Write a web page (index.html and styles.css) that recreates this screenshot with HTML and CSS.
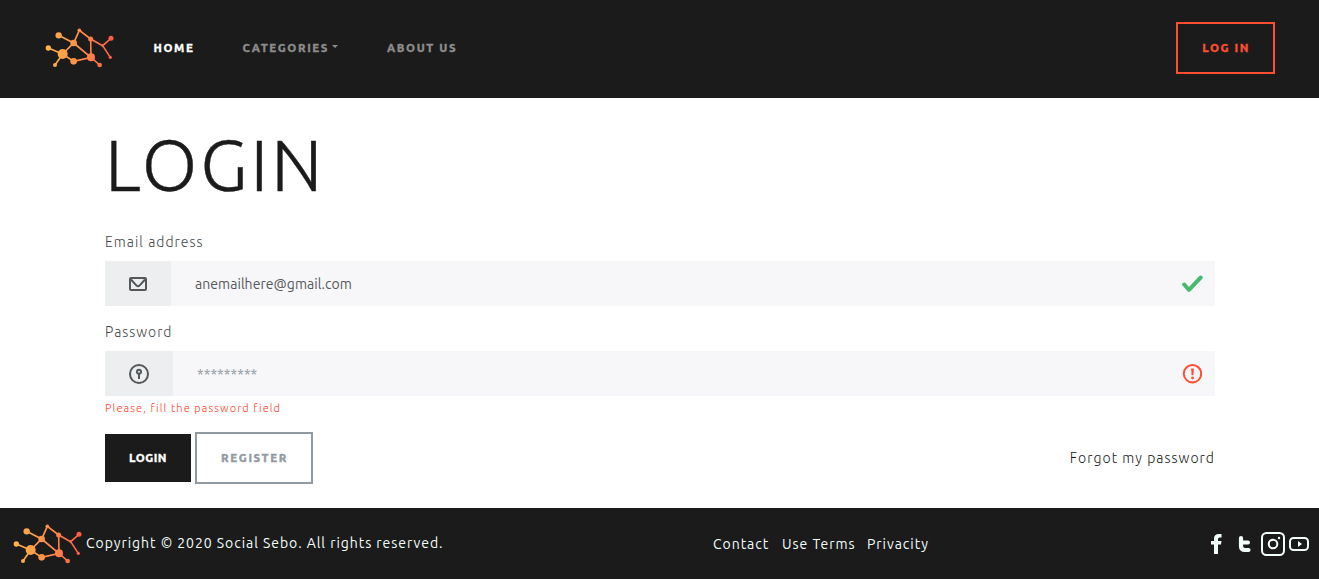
FILE: index.html
```html
<!DOCTYPE html>
<html lang="en">
<head>
<meta charset="utf-8">
<title>Social Sebo - Login</title>
<link rel="stylesheet" href="styles.css">
</head>
<body>
<svg class="defs" width="0" height="0" aria-hidden="true">
  <defs>
    <linearGradient id="warm" gradientUnits="userSpaceOnUse" x1="30" y1="0" x2="236" y2="0">
      <stop offset="0" stop-color="#ffb648"/><stop offset=".6" stop-color="#ff8648"/><stop offset="1" stop-color="#fa5a48"/>
    </linearGradient>
    <symbol id="logo" viewBox="30 36 210 126">
      <path d="M71 61L116 84L133 46L167 72L203 92L228 70M203 92L226 127M40 99L83 117L60 150M83 117L116 84L168 127L167 72M83 117L116 139L168 127L194 150" fill="none" stroke="url(#warm)" stroke-width="5"/>
      <g fill="url(#warm)">
        <circle cx="71" cy="61" r="9.5"/><circle cx="133" cy="46" r="5.5"/><circle cx="116" cy="84" r="10"/><circle cx="167" cy="72" r="7.5"/><circle cx="228" cy="70" r="7.5"/><circle cx="203" cy="92" r="4"/><circle cx="226" cy="127" r="5"/><circle cx="40" cy="99" r="8"/><circle cx="83" cy="117" r="15"/><circle cx="60" cy="150" r="6"/><circle cx="116" cy="139" r="10"/><circle cx="168" cy="127" r="12"/><circle cx="194" cy="150" r="7"/>
      </g>
    </symbol>
  </defs>
</svg>
<header class="topbar">
  <svg class="logo"><use href="#logo"/></svg>
  <nav class="nav">
    <a class="nav-link active">HOME</a>
    <a class="nav-link categories">CATEGORIES<span class="caret"></span></a>
    <a class="nav-link about">ABOUT US</a>
  </nav>
  <a class="btn btn-login">LOG IN</a>
</header>
<main class="content">
  <h1 class="title">LOGIN</h1>
  <label class="label label-email">Email address</label>
  <div class="field">
    <span class="addon"><svg width="18" height="14" viewBox="0 0 18 14"><rect x="1" y="1" width="16" height="12" rx="1" fill="none" stroke="#55585b" stroke-width="2"/><path d="M2 2.5L7.5 8.6Q9 10 10.500 8.600L16 2.500" fill="none" stroke="#55585b" stroke-width="2"/></svg></span>
    <span class="value email">anemailhere@gmail.com</span>
    <svg class="status" width="22" height="18" viewBox="0 0 22 18"><path d="M3.200 9.500L8 14.800L19.700 2.500" fill="none" stroke="#48b971" stroke-width="4" stroke-linecap="round" stroke-linejoin="round"/></svg>
  </div>
  <label class="label label-password">Password</label>
  <div class="field field-password">
    <span class="addon addon-password"><svg width="20" height="20" viewBox="0 0 20 20" fill="none" stroke="#55585b" stroke-width="2"><circle cx="10" cy="10" r="9"/><circle cx="10" cy="7.700" r="2"/><path d="M10 9.500V15"/></svg></span>
    <span class="value stars">*********</span>
    <svg class="status" width="20" height="20" viewBox="0 0 20 20"><circle cx="10.500" cy="9.700" r="8.700" fill="none" stroke="#ff4e31" stroke-width="2"/><path d="M9.100 4.500H11.900L11.400 11.300H9.600Z" fill="#ff4e31"/><circle cx="10.500" cy="14" r="1.400" fill="#ff4e31"/></svg>
  </div>
  <p class="error">Please, fill the password field</p>
  <div class="actions">
    <button class="btn btn-submit">LOGIN</button>
    <button class="btn btn-register">REGISTER</button>
    <a class="forgot">Forgot my password</a>
  </div>
</main>
<footer class="footer">
  <svg class="logo"><use href="#logo"/></svg>
  <span class="copyright">Copyright © 2020 Social Sebo. All rights reserved.</span>
  <nav class="links"><a class="contact">Contact</a><a class="terms">Use Terms</a><a class="privacy">Privacity</a></nav>
  <svg class="social" width="100" height="26" viewBox="0 0 100 26">
    <path d="M12.500 3H10Q5 3 5 7.500V10H2V13.500H5V23H9V13.500H12L12.500 10H9V8Q9 6.500 10.500 6.500H12.500Z" fill="#f4fffc"/>
    <path d="M32 7V15Q32 19 36 19H39.500" fill="none" stroke="#f4fffc" stroke-width="4.200" stroke-linejoin="round" stroke-linecap="round"/><path d="M32 11.500H39" stroke="#f4fffc" stroke-width="4" stroke-linecap="round"/>
    <g fill="none" stroke="#f4fffc" stroke-width="2"><rect x="53" y="2" width="22" height="22" rx="4.500"/><circle cx="64" cy="13" r="4.300"/><rect x="81" y="7" width="18" height="12" rx="3.500"/></g>
    <circle cx="70" cy="7" r="1.200" fill="#f4fffc"/><path d="M89 10L93 13L89 16Z" fill="#f4fffc"/>
  </svg>
</footer>
</body>
</html>
```
FILE: styles.css
```css
* { box-sizing: border-box; }
body { margin: 0; height: 579px; display: flex; flex-direction: column; background: #fff; color: #1b1b1b; font-family: Ubuntu, "Noto Sans", sans-serif; font-size: 14px; letter-spacing: 1px; white-space: nowrap; }
.defs { position: absolute; }
.logo { width: 70px; height: 42px; flex: none; }
.topbar { height: 98px; flex: none; background: #1b1b1b; display: flex; align-items: center; padding: 0 44px 2px 45px; }
.nav { display: flex; margin-left: 38.5px; padding-bottom: 2px; font-size: 11.4px; font-weight: 800; letter-spacing: 1.6px; -webkit-text-stroke: .3px currentColor; }
.nav-link { color: #8c8c8c; display: flex; align-items: center; }
.active { color: #fff; width: 89px; }
.categories { width: 144.5px; }
.caret { border: 3.500px solid transparent; border-top-color: #8c8c8c; border-bottom: 0; margin: -1px 0 0 3px; }
.btn { display: flex; align-items: center; justify-content: center; font-family: inherit; font-size: 11.4px; font-weight: 800; letter-spacing: 1.6px; -webkit-text-stroke: .3px currentColor; padding: 0 0 2px; border: 0; border-radius: 0; }
.btn-login { width: 99px; height: 52px; border: 2px solid #ff4e31; color: #ff4e31; margin-left: auto; padding-left: 1px; }
.content { height: 410px; flex: none; margin: 0 104px 0 105px; display: flex; flex-direction: column; }
.title { margin: 22px 0 0; height: 90px; line-height: 90px; font-size: 72px; font-weight: 300; letter-spacing: 3px; -webkit-text-stroke: .4px currentColor; }
.label { font-weight: 300; line-height: 20px; height: 20px; color: #44484b; }
.label-email { margin: 22px 0 9px; letter-spacing: 1.05px; }
.label-password { margin: 16px 0 9px; }
.field { height: 45px; flex: none; display: flex; align-items: center; background: #f7f7f9; padding-right: 12px; }
.field-password { padding-right: 13px; }
.addon { width: 66px; height: 45px; display: flex; align-items: center; justify-content: center; background: #eceeef; }
.addon-password { width: 68px; }
.value { margin-left: 24px; color: #55585b; letter-spacing: .05px; }
.stars { color: #919aa1; }
.status { margin-left: auto; }
.error { margin: 3px 0 0; height: 18px; line-height: 18px; font-size: 11px; font-weight: 300; color: #ff3718; letter-spacing: 1.09px; }
.actions { margin-top: 15px; height: 52px; display: flex; align-items: center; gap: 4px; }
.btn-submit { width: 86px; height: 48px; background: #1b1b1b; color: #fff; letter-spacing: .5px; }
.btn-register { width: 118px; height: 52px; background: #fff; border: 2px solid #919aa1; color: #919aa1; padding-left: 1px; }
.forgot { margin-left: auto; font-weight: 300; letter-spacing: 1.05px; }
.footer { height: 71px; background: #1b1b1b; color: #f4fffc; display: flex; align-items: center; padding: 0 10px 0 13px; }
.copyright { width: 627px; margin: -2px 0 0 3px; letter-spacing: .95px; }
.links { display: flex; letter-spacing: .96px; }
.contact { width: 69px; }
.terms { width: 85px; }
.social { margin-left: auto; }
```
